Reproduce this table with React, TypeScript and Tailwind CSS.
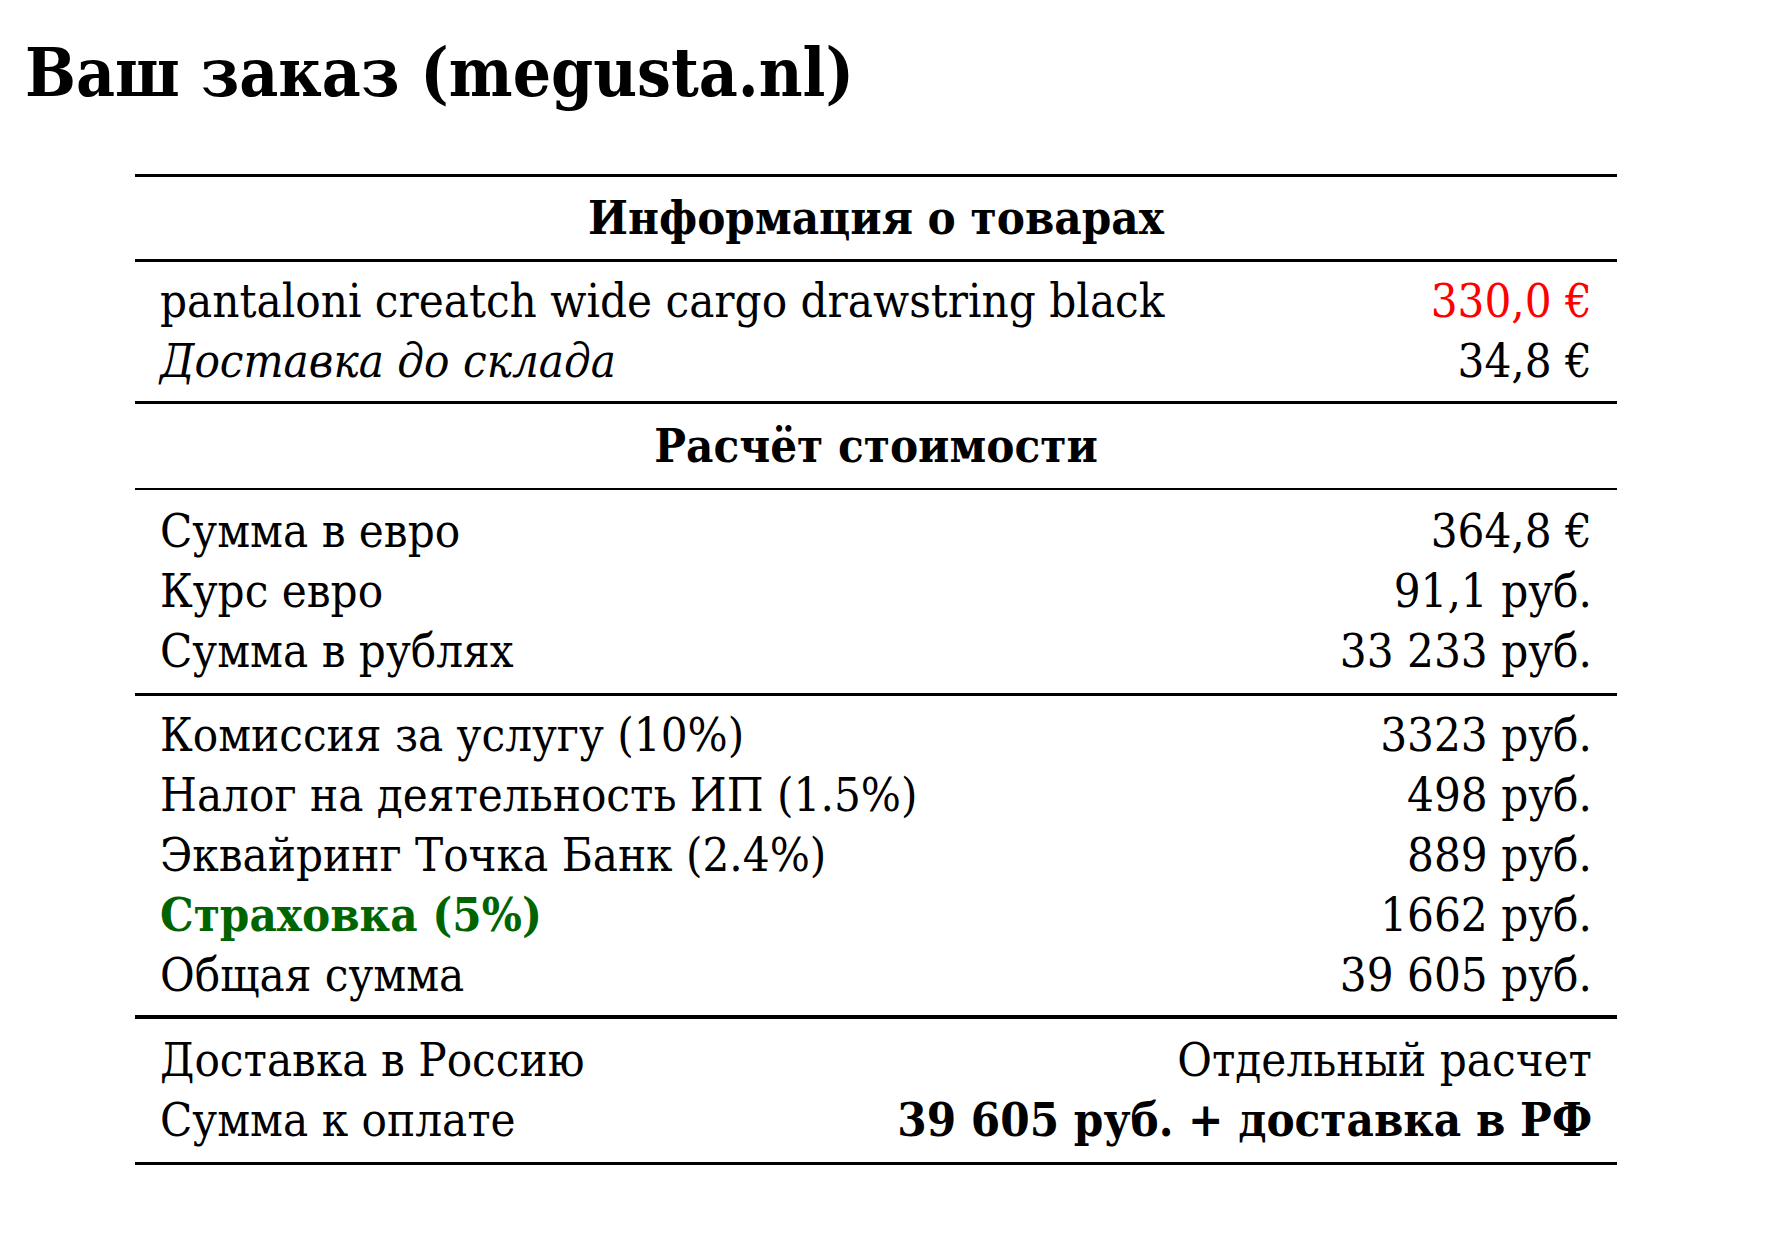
import React from "react";

const serif = "[font-family:'DejaVu_Serif_Condensed','DejaVu_Serif',serif] font-stretch-condensed";

function Row({ left, right, leftClass = "", rightClass = "" }: { left: React.ReactNode; right: React.ReactNode; leftClass?: string; rightClass?: string }) {
  return (
    <div className="flex justify-between items-baseline h-[60px] leading-[60px]">
      <span className={leftClass}>{left}</span>
      <span className={rightClass}>{right}</span>
    </div>
  );
}

export default function App() {
  return (
    <div className={`${serif} bg-white text-black min-h-[1250px] w-[1775px]`}>
      <h1 className="pl-[25px] pt-[28px] text-[67px] leading-[90px] font-bold">Ваш заказ (megusta.nl)</h1>
      <div className="ml-[135px] w-[1482px] mt-[56px] text-[47px]">
        <div className="h-[3px] bg-black" />
        <div className="py-[11px] h-[82px] leading-[60px] text-center font-bold">Информация о товарах</div>
        <div className="h-[3px] bg-black" />
        <div className="px-[25px] pt-[9px] pb-[10px]">
          <Row left="pantaloni creatch wide cargo drawstring black" right="330,0 €" rightClass="text-[#ff0000]" />
          <Row left="Доставка до склада" right="34,8 €" leftClass="italic" />
        </div>
        <div className="h-[3px] bg-black" />
        <div className="py-[12px] h-[84px] leading-[60px] text-center font-bold">Расчёт стоимости</div>
        <div className="h-[2px] bg-black" />
        <div className="px-[25px] pt-[11px] pb-[12px]">
          <Row left="Сумма в евро" right="364,8 €" />
          <Row left="Курс евро" right="91,1 руб." />
          <Row left="Сумма в рублях" right="33 233 руб." />
        </div>
        <div className="h-[3px] bg-black" />
        <div className="px-[25px] pt-[9px] pb-[10px]">
          <Row left="Комиссия за услугу (10%)" right="3323 руб." />
          <Row left="Налог на деятельность ИП (1.5%)" right="498 руб." />
          <Row left="Эквайринг Точка Банк (2.4%)" right="889 руб." />
          <Row left="Страховка (5%)" right="1662 руб." leftClass="font-bold text-[#006400]" />
          <Row left="Общая сумма" right="39 605 руб." />
        </div>
        <div className="h-[4px] bg-black" />
        <div className="px-[25px] pt-[11px] pb-[12px]">
          <Row left="Доставка в Россию" right="Отдельный расчет" />
          <Row left="Сумма к оплате" right="39 605 руб. + доставка в РФ" rightClass="font-bold" />
        </div>
        <div className="h-[3px] bg-black" />
      </div>
    </div>
  );
}
